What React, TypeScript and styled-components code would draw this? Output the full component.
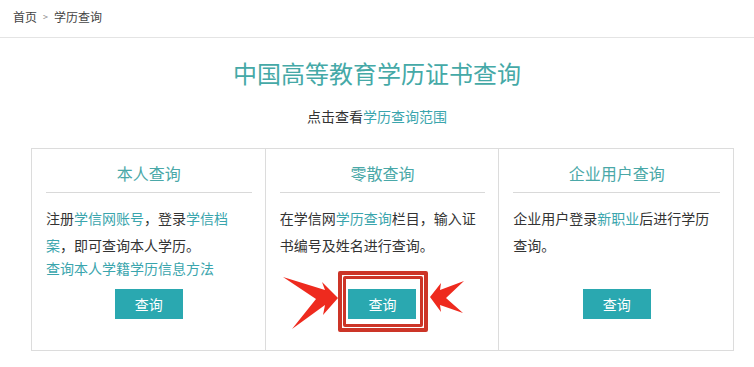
import React from "react";
import styled, { createGlobalStyle } from "styled-components";

const Global = createGlobalStyle`
  html, body { margin: 0; padding: 0; background: #fff; }
  body { font-family: "Noto Sans CJK SC", "Noto Sans", sans-serif; color: #333; }
  * { box-sizing: border-box; }
`;

const Page = styled.div`
  width: 754px;
  height: 367px;
  overflow: hidden;
  background: #fff;
`;

const Breadcrumb = styled.div`
  height: 38px;
  display: flex;
  align-items: center;
  padding: 0 0 3px 13px;
  border-bottom: 1px solid #e4e4e4;
  font-size: 12px;
  line-height: 16px;
  color: #444;
  gap: 6px;
`;

const Sep = styled.span`
  font-size: 9px;
  color: #888;
`;

const Title = styled.h1`
  margin: 20px 0 0;
  text-align: center;
  font-size: 24px;
  line-height: 30px;
  font-weight: 400;
  color: #45a9a7;
`;

const Sub = styled.p`
  margin: 18px 0 0;
  text-align: center;
  font-size: 14px;
  line-height: 20px;
  color: #333;
`;

const Link = styled.a`
  color: #3aa5ad;
  text-decoration: none;
`;

const Grid = styled.div`
  margin: 22px 0 0 31px;
  width: 703px;
  display: grid;
  grid-template-columns: repeat(3, 1fr);
  border: 1px solid #dcdcdc;
`;

const Card = styled.div<{ $last?: boolean }>`
  height: 201px;
  display: flex;
  flex-direction: column;
  padding: 13px 13px 31px 14px;
  border-right: ${(p) => (p.$last ? "none" : "1px solid #dcdcdc")};
`;

const CardTitle = styled.h2`
  margin: 0;
  padding-bottom: 8px;
  border-bottom: 1px solid #d9d9d9;
  text-align: center;
  font-size: 16px;
  line-height: 22px;
  font-weight: 400;
  color: #4aa8a8;
`;

const Body = styled.p`
  margin: 12px 0 0;
  font-size: 14px;
  line-height: 27px;
  color: #333;
`;

const ExtraLink = styled(Link)`
  display: block;
  font-size: 14px;
  line-height: 18px;
`;

const ButtonWrap = styled.div`
  margin-top: auto;
  align-self: center;
  position: relative;
`;

const Button = styled.button`
  display: block;
  width: 68px;
  height: 30px;
  border: none;
  background: #2aa8b0;
  color: #fff;
  font-family: inherit;
  font-size: 14px;
  line-height: 30px;
  padding: 0;
`;

const Frame = styled.div<{ $l: number; $t: number; $w: number; $h: number; $b: number }>`
  position: absolute;
  left: ${(p) => p.$l}px;
  top: ${(p) => p.$t}px;
  width: ${(p) => p.$w}px;
  height: ${(p) => p.$h}px;
  border: ${(p) => p.$b}px solid #cc3528;
  border-radius: 2px;
  pointer-events: none;
`;

const Arrows = styled.svg`
  position: absolute;
  left: -73px;
  top: -25px;
  width: 200px;
  height: 75px;
  pointer-events: none;
`;

export default function App() {
  return (
    <Page>
      <Global />
      <Breadcrumb>
        <span>首页</span>
        <Sep>&gt;</Sep>
        <span>学历查询</span>
      </Breadcrumb>
      <Title>中国高等教育学历证书查询</Title>
      <Sub>
        点击查看<Link>学历查询范围</Link>
      </Sub>
      <Grid>
        <Card>
          <CardTitle>本人查询</CardTitle>
          <Body>
            注册<Link>学信网账号</Link>，登录<Link>学信档案</Link>，即可查询本人学历。
          </Body>
          <ExtraLink>查询本人学籍学历信息方法</ExtraLink>
          <ButtonWrap>
            <Button>查询</Button>
          </ButtonWrap>
        </Card>
        <Card>
          <CardTitle>零散查询</CardTitle>
          <Body>
            在学信网<Link>学历查询</Link>栏目，输入证书编号及姓名进行查询。
          </Body>
          <ButtonWrap>
            <Button>查询</Button>
            <Frame $l={-10} $t={-18} $w={90} $h={61} $b={4} />
            <Frame $l={-5} $t={-13} $w={80} $h={51} $b={3} />
            <Arrows viewBox="275 265 200 75">
              <polygon
                fill="#ee2a1e"
                points="283,278 325,291 322,283 338,299 323,316 325,306 292,330 316,300"
              />
              <polygon
                fill="#ee2a1e"
                points="430,298 441,284 440,291 464,282 446,299 463,314 440,306 441,313"
              />
            </Arrows>
          </ButtonWrap>
        </Card>
        <Card $last>
          <CardTitle>企业用户查询</CardTitle>
          <Body>
            企业用户登录<Link>新职业</Link>后进行学历查询。
          </Body>
          <ButtonWrap>
            <Button>查询</Button>
          </ButtonWrap>
        </Card>
      </Grid>
    </Page>
  );
}
